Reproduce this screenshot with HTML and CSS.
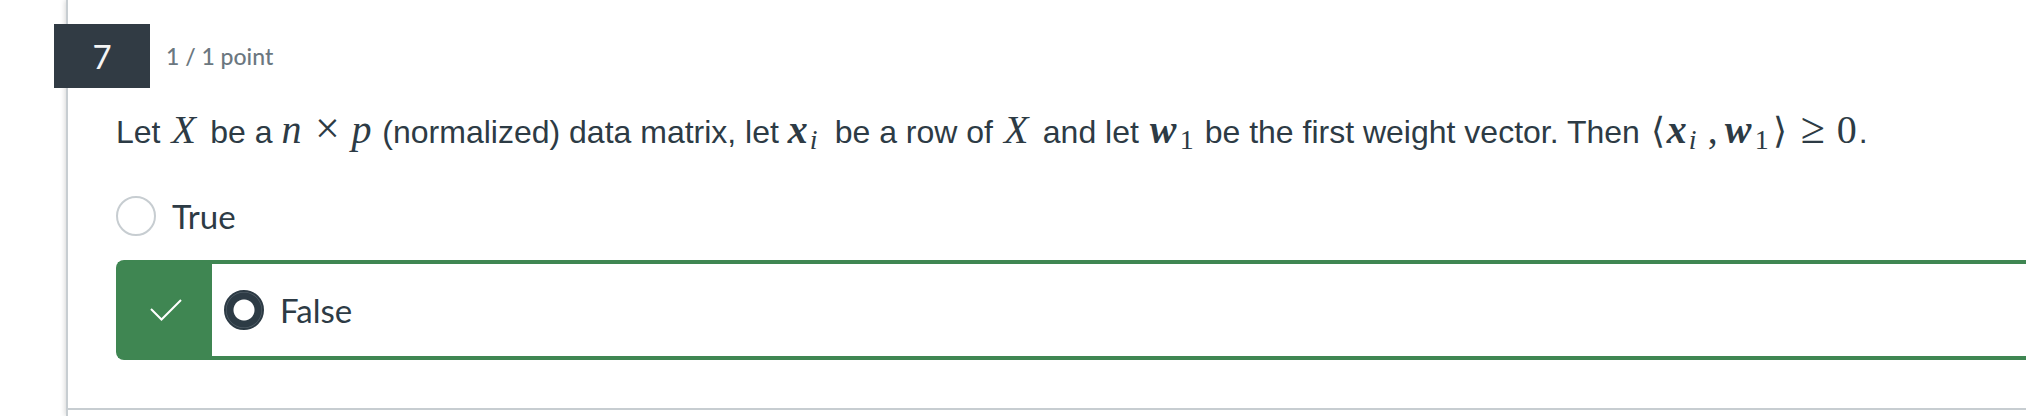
FILE: index.html
```html
<!DOCTYPE html>
<html lang="en">
<head>
<meta charset="utf-8">
<title>Question 7</title>
<link rel="stylesheet" href="styles.css">
</head>
<body>
<main class="quiz">
  <section class="question">
    <header class="question-header">
      <h2 class="number">7</h2>
      <span class="points">1 / 1 point</span>
    </header>
    <div class="question-body">
      <p class="prompt">Let <span class="math cap">X</span> be a <span class="math var">n</span><span class="math rel times">×</span><span class="math var">p</span> (normalized) data matrix, let <span class="math vec">x</span><span class="math sub it">i</span> be a row of <span class="math cap">X</span> and let <span class="math vec wide">w</span><span class="math sub">1</span> be the first weight vector. Then <span class="math angle">⟨</span><span class="math vec">x</span><span class="math sub it tight">i</span><span class="math comma">,</span><span class="math vec wide">w</span><span class="math sub">1</span><span class="math angle">⟩</span><span class="math rel">≥</span><span class="math zero">0</span>.</p>
      <label class="answer">
        <input class="radio" type="radio" name="answer">
        <span>True</span>
      </label>
      <div class="correct">
        <div class="mark">
          <svg class="check" viewBox="0 0 32 24" role="img" aria-label="Correct"><path d="M1 11 L11.500 21.500 L31 2" fill="none" stroke="#fff" stroke-width="2"/></svg>
        </div>
        <label class="answer inner">
          <input class="radio" type="radio" name="answer" checked>
          <span>False</span>
        </label>
      </div>
    </div>
  </section>
</main>
</body>
</html>
```
FILE: styles.css
```css
* { box-sizing: border-box; }
body {
  margin: 0;
  background: #fff;
  color: #2d3b45;
  font-family: Lato, sans-serif;
  font-size: 33px;
  overflow: hidden;
}
.quiz {
  margin-left: 66px;
  min-height: 100vh;
  border-left: 2px solid #c7cdd1;
  box-shadow: -1px 0 5px rgba(0, 0, 0, 0.16);
}
.question {
  padding: 24px 0 48px;
  border-bottom: 2px solid #c7cdd1;
}
.question-header {
  display: flex;
  align-items: center;
  gap: 16px;
  margin-left: -14px;
}
.number {
  width: 96px;
  margin: 0;
  background: #313b44;
  color: #f5f5f5;
  font-size: 33px;
  font-weight: 400;
  line-height: 64px;
  text-align: center;
}
.points {
  color: #6b7780;
  font-size: 23px;
  font-weight: 500;
}
.question-body { padding: 20px 0 0 48px; }
.prompt {
  margin: 0;
  height: 48px;
  font-family: "Liberation Sans", Arial, sans-serif;
  font-size: 32px;
  line-height: 48px;
  white-space: nowrap;
}
.math {
  display: inline-block;
  font-family: "Liberation Serif", serif;
  font-size: 40px;
  line-height: 40px;
}
.cap { width: 32px; padding-left: 2px; font-style: italic; }
.var { width: 22px; font-style: italic; }
.rel { width: 48px; font-size: 44px; text-align: center; }
.vec { width: 22px; font-style: italic; font-weight: 700; }
.wide { width: 32px; padding-left: 2px; }
.sub {
  width: 16px;
  font-size: 28px;
  line-height: 28px;
  vertical-align: -6px;
}
.it { font-style: italic; }
.tight { width: 14px; }
.comma { width: 20px; text-align: center; }
.angle { width: 18px; padding-left: 2px; font-family: "DejaVu Sans", sans-serif; font-size: 36px; font-weight: 200; }
.zero { width: 22px; }
.answer {
  display: flex;
  align-items: center;
  gap: 16px;
  padding: 40px 0 24px;
  line-height: 40px;
}
.radio {
  appearance: none;
  width: 40px;
  height: 40px;
  margin: 0;
  border: 2px solid #c7cdd1;
  border-radius: 50%;
  background: #fff;
}
.radio:checked {
  border-color: #2d3b45;
  background: radial-gradient(circle, #fff 10px, #2d3b45 11px, #2d3b45 17px, #5c6871 18px);
}
.correct {
  display: flex;
  border: 4px solid #3f8652;
  border-right: 0;
  border-radius: 8px 0 0 8px;
  background: #3f8652;
}
.mark {
  display: flex;
  flex: 0 0 92px;
  align-items: center;
  justify-content: center;
}
.check { width: 32px; height: 24px; }
.inner {
  flex: 1;
  padding: 26px 12px;
  background: #fff;
}
```
